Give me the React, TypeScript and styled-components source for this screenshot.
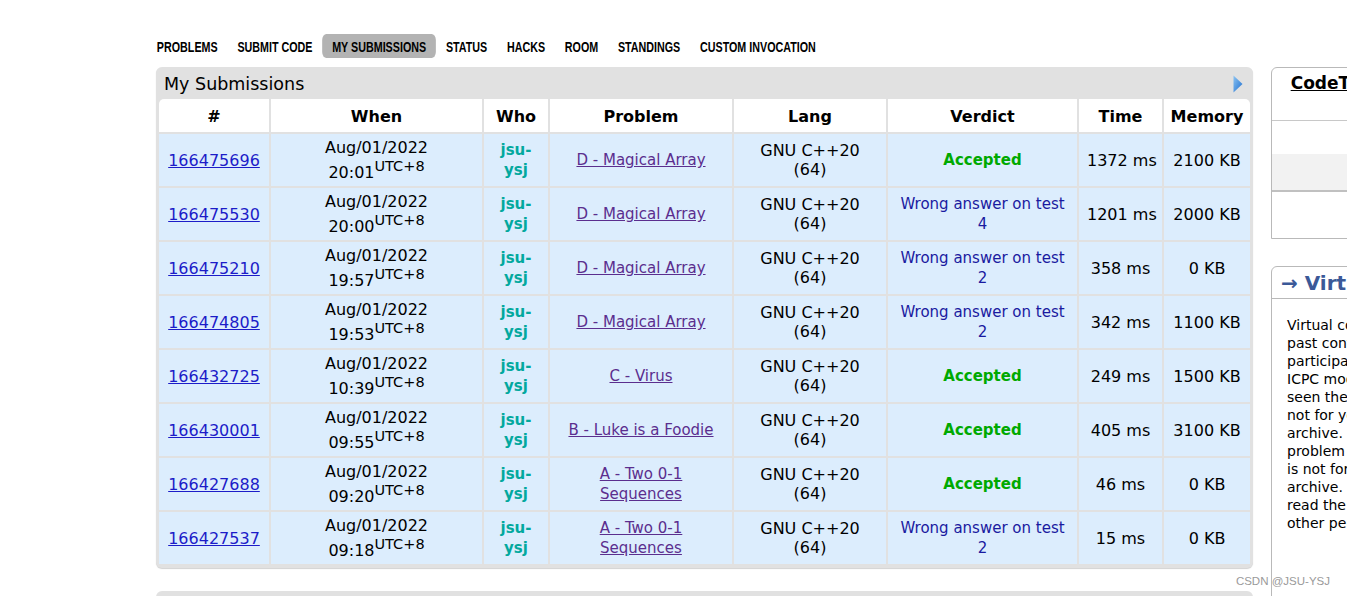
import styled, { createGlobalStyle } from 'styled-components';

const Global = createGlobalStyle`
    html, body {
        margin: 0;
        padding: 0;
        background: #fff;
        overflow: hidden;
        font-family: "DejaVu Sans", Verdana, sans-serif;
        color: #000;
    }
`

const Page = styled.div`
    padding: 34px 0 0 156px;
    width: 1600px;
`

// the reference nav uses a narrow bold face; squeeze a regular one to match
const Nav = styled.ul`
    display: flex;
    list-style: none;
    margin: 0 0 0 -9px;
    padding: 0;
    height: 24px;
    transform: scaleX(0.715);
    transform-origin: left center;
`

const NavItem = styled.li<{ $active?: boolean }>`
    display: flex;
    align-items: center;
    padding: 1px 13.8px 0;
    font-family: "Liberation Sans", Arial, sans-serif;
    font-weight: bold;
    font-size: 15px;
    color: #000;
    border-radius: 6px;
    background: ${p => (p.$active ? '#b3b3b3' : 'transparent')};
`

const Columns = styled.div`
    display: flex;
    align-items: flex-start;
    gap: 18px;
    margin-top: 9px;
`

const Main = styled.div`
    width: 1097px;
    flex-shrink: 0;
`

const Panel = styled.div`
    background: #e1e1e1;
    border-radius: 6px;
    padding: 0 1px 2px 1px;
    box-shadow: 0 1px 1px #d2d2d2;
`

const PanelTitle = styled.div`
    height: 30px;
    display: flex;
    align-items: center;
    justify-content: space-between;
    padding: 3px 9px 0 7px;
    box-sizing: border-box;
    font-size: 17.5px;
`

const Table = styled.table`
    width: 100%;
    table-layout: fixed;
    border-collapse: separate;
    border-spacing: 2px;
`

const Th = styled.th`
    background: #fff;
    height: 32px;
    padding: 1px 0 0;
    font-size: 16px;
    font-weight: bold;
    text-align: center;
    vertical-align: middle;
    &:first-child { border-top-left-radius: 5px; }
    &:last-child { border-top-right-radius: 5px; }
`

const Td = styled.td<{ $nowrap?: boolean }>`
    background: #dcedfd;
    height: 52px;
    padding: 0 8px;
    font-size: 16px;
    line-height: 19px;
    text-align: center;
    vertical-align: middle;
    white-space: ${p => (p.$nowrap ? 'nowrap' : 'normal')};
`

const IdLink = styled.a`
    color: #1c1cc8;
    text-decoration: underline;
`

const Sup = styled.sup`
    font-size: 14.5px;
    line-height: 19px;
    vertical-align: 7px;
`

const User = styled.span`
    color: #03a89e;
    font-weight: bold;
    font-size: 15px;
`

const ProblemLink = styled.a`
    color: #5b2e8e;
    font-size: 15px;
    text-decoration: underline;
`

const Verdict = styled.span<{ $ok: boolean }>`
    font-size: 15px;
    color: ${p => (p.$ok ? '#00a900' : '#1a1aa0')};
    font-weight: ${p => (p.$ok ? 'bold' : 'normal')};
`

const NextPanel = styled.div`
    margin-top: 23px;
    height: 30px;
    background: #e1e1e1;
    border-radius: 6px 6px 0 0;
`

const Sidebar = styled.div`
    width: 341px;
    flex-shrink: 0;
    display: flex;
    flex-direction: column;
    gap: 27px;
`

const SideBox = styled.div`
    border: 1px solid #b9b9b9;
    border-radius: 6px 6px 0 0;
    background: #fff;
    overflow: hidden;
`

const ContestHead = styled.div`
    height: 53px;
    padding: 4px 14px 0 15px;
    box-sizing: border-box;
    text-align: center;
    border-bottom: 1px solid #c8c8c8;
    a {
        color: #000;
        font-weight: bold;
        font-size: 17px;
        line-height: 22px;
        text-decoration: underline;
    }
`

const ContestRow = styled.div<{ $shade?: boolean; $h: number }>`
    height: ${p => p.$h}px;
    display: flex;
    align-items: center;
    justify-content: center;
    font-size: 14px;
    background: ${p => (p.$shade ? '#f2f2f2' : '#fff')};
    border-bottom: ${p => (p.$shade ? '2px solid #c0c0c0' : 'none')};
`

const BoxCaption = styled.div`
    height: 32px;
    display: flex;
    align-items: center;
    padding: 1px 9px 0;
    box-sizing: border-box;
    border-bottom: 1px solid #b9b9b9;
    color: #3b5998;
    font-weight: bold;
    font-size: 20px;
`

const BoxText = styled.div`
    padding: 17px 15px 40px;
    font-size: 14px;
    line-height: 18px;
    height: 300px;
    white-space: nowrap;
`

const Watermark = styled.div`
    position: absolute;
    right: 17px;
    bottom: 9px;
    font-family: "Liberation Sans", Arial, sans-serif;
    font-size: 11.5px;
    color: #9a9a9a;
`

function Arrow() {
    return (
        <svg width="10" height="18" viewBox="0 0 10 18">
            <defs>
                <linearGradient id="ag" x1="0" y1="0" x2="1" y2="1">
                    <stop offset="0" stopColor="#8cc4f2" />
                    <stop offset="1" stopColor="#1f6fd0" />
                </linearGradient>
            </defs>
            <polygon points="0.5,0.5 9.5,9 0.5,17.5" fill="url(#ag)" />
        </svg>
    )
}

const rows = [
    { id: '166475696', date: 'Aug/01/2022', time: '20:01', problem: 'D - Magical Array', verdict: 'Accepted', t: '1372 ms', mem: '2100 KB' },
    { id: '166475530', date: 'Aug/01/2022', time: '20:00', problem: 'D - Magical Array', verdict: 'Wrong answer on test 4', t: '1201 ms', mem: '2000 KB' },
    { id: '166475210', date: 'Aug/01/2022', time: '19:57', problem: 'D - Magical Array', verdict: 'Wrong answer on test 2', t: '358 ms', mem: '0 KB' },
    { id: '166474805', date: 'Aug/01/2022', time: '19:53', problem: 'D - Magical Array', verdict: 'Wrong answer on test 2', t: '342 ms', mem: '1100 KB' },
    { id: '166432725', date: 'Aug/01/2022', time: '10:39', problem: 'C - Virus', verdict: 'Accepted', t: '249 ms', mem: '1500 KB' },
    { id: '166430001', date: 'Aug/01/2022', time: '09:55', problem: 'B - Luke is a Foodie', verdict: 'Accepted', t: '405 ms', mem: '3100 KB' },
    { id: '166427688', date: 'Aug/01/2022', time: '09:20', problem: 'A - Two 0-1 Sequences', verdict: 'Accepted', t: '46 ms', mem: '0 KB' },
    { id: '166427537', date: 'Aug/01/2022', time: '09:18', problem: 'A - Two 0-1 Sequences', verdict: 'Wrong answer on test 2', t: '15 ms', mem: '0 KB' },
]

const navItems = ['PROBLEMS', 'SUBMIT CODE', 'MY SUBMISSIONS', 'STATUS', 'HACKS', 'ROOM', 'STANDINGS', 'CUSTOM INVOCATION']

const virtualText = [
    'Virtual contest is a way to take part in',
    'past contest, as close as possible to',
    'participation on time. It is supported only',
    'ICPC mode for virtual contests. If you\'ve',
    'seen these problems, a virtual contest is',
    'not for you - solve these problems in the',
    'archive. If you just want to solve some',
    'problem from a contest, a virtual contest',
    'is not for you - solve this problem in the',
    'archive. Never use someone else\'s code,',
    'read the tutorials or communicate with',
    'other person during a virtual contest.',
]

function App() {
    return (
        <>
            <Global />
            <Page>
                <Nav>
                    {navItems.map(n => (
                        <NavItem key={n} $active={n === 'MY SUBMISSIONS'}>{n}</NavItem>
                    ))}
                </Nav>
                <Columns>
                    <Main>
                        <Panel>
                            <PanelTitle>
                                <span>My Submissions</span>
                                <Arrow />
                            </PanelTitle>
                            <Table>
                                <colgroup>
                                    <col style={{ width: 110 }} />
                                    <col style={{ width: 211 }} />
                                    <col style={{ width: 64 }} />
                                    <col style={{ width: 182 }} />
                                    <col style={{ width: 152 }} />
                                    <col style={{ width: 189 }} />
                                    <col style={{ width: 83 }} />
                                    <col style={{ width: 86 }} />
                                </colgroup>
                                <thead>
                                    <tr>
                                        <Th>#</Th>
                                        <Th>When</Th>
                                        <Th>Who</Th>
                                        <Th>Problem</Th>
                                        <Th>Lang</Th>
                                        <Th>Verdict</Th>
                                        <Th>Time</Th>
                                        <Th>Memory</Th>
                                    </tr>
                                </thead>
                                <tbody>
                                    {rows.map(r => (
                                        <tr key={r.id}>
                                            <Td><IdLink href="#">{r.id}</IdLink></Td>
                                            <Td>{r.date}<br />{r.time}<Sup>UTC+8</Sup></Td>
                                            <Td><User>jsu-ysj</User></Td>
                                            <Td><ProblemLink href="#">{r.problem}</ProblemLink></Td>
                                            <Td>GNU C++20 (64)</Td>
                                            <Td><Verdict $ok={r.verdict === 'Accepted'}>{r.verdict}</Verdict></Td>
                                            <Td $nowrap>{r.t}</Td>
                                            <Td $nowrap>{r.mem}</Td>
                                        </tr>
                                    ))}
                                </tbody>
                            </Table>
                        </Panel>
                        <NextPanel />
                    </Main>
                    <Sidebar>
                        <SideBox>
                            <ContestHead>
                                <a href="#">CodeTON Round 2 (Div. 1 + Div. 2, Rated, Prizes!)</a>
                            </ContestHead>
                            <ContestRow $h={33}>Finished</ContestRow>
                            <ContestRow $h={36} $shade>Practice?</ContestRow>
                            <ContestRow $h={46}>Are you a coordinator?</ContestRow>
                        </SideBox>
                        <SideBox>
                            <BoxCaption>→ Virtual participation</BoxCaption>
                            <BoxText>
                                {virtualText.map((l, i) => (
                                    <div key={i}>{l}</div>
                                ))}
                            </BoxText>
                        </SideBox>
                    </Sidebar>
                </Columns>
            </Page>
            <Watermark>CSDN @JSU-YSJ</Watermark>
        </>
    )
}

export default App
